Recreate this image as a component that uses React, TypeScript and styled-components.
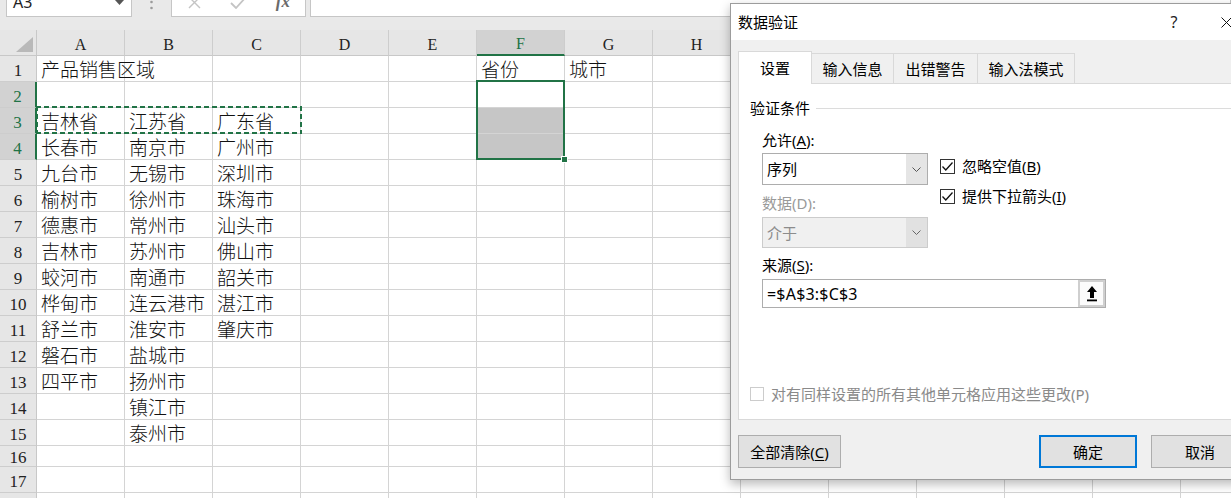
import styled, { createGlobalStyle } from 'styled-components'

const GlobalStyle = createGlobalStyle`
  html, body {
    margin: 0;
    padding: 0;
    background: #fff;
  }
  body {
    font-family: 'Noto Sans', 'Noto Sans CJK SC', sans-serif;
  }
`

const green = '#217346'

const Screen = styled.div`
  position: relative;
  width: 1231px;
  height: 498px;
  overflow: hidden;
  background: #fff;
`

/* ---------- formula bar ---------- */

const TopBar = styled.div`
  height: 30px;
  background: #e9e9e9;
  overflow: hidden;
`

const FormulaRow = styled.div`
  display: flex;
  align-items: stretch;
  height: 30px;
  margin-top: -13px;
  padding-left: 6px;
`

const NameBox = styled.div`
  width: 126px;
  box-sizing: border-box;
  background: #fff;
  border: 1px solid #c6c6c6;
  display: flex;
  align-items: center;
  justify-content: space-between;
  padding: 0 7px 0 6px;
  font-size: 16px;
  color: #222;
`

const Grip = styled.div`
  width: 39px;
  display: flex;
  align-items: center;
  justify-content: center;
`

const FxBox = styled.div`
  width: 135px;
  box-sizing: border-box;
  background: #fff;
  border: 1px solid #c6c6c6;
  display: flex;
`

const FxSlot = styled.div`
  flex: 1;
  display: flex;
  align-items: center;
  justify-content: center;
`

const FxText = styled.span`
  font-family: 'Liberation Serif', serif;
  font-style: italic;
  font-weight: bold;
  font-size: 17px;
  color: #6a6a6a;
`

const FormulaInput = styled.div`
  flex: 1;
  margin-left: 4px;
  background: #fff;
  border: 1px solid #c6c6c6;
`

/* ---------- sheet ---------- */

const Sheet = styled.div`
  display: grid;
  grid-template-columns: 37px repeat(14, 88px);
  grid-template-rows: 26px repeat(15, 26px) 21px repeat(2, 26px);
  font-family: 'Liberation Serif', 'Noto Sans CJK SC', serif;
`

type Place = { $row: number; $col: number }

const Corner = styled.div<Place>`
  grid-row: ${(p) => p.$row};
  grid-column: ${(p) => p.$col};
  background: #e6e6e6;
  border-right: 1px solid #c8c8c8;
  border-bottom: 1px solid #c8c8c8;
  box-sizing: border-box;
`

const ColHeader = styled.div<Place & { $active?: boolean }>`
  grid-row: ${(p) => p.$row};
  grid-column: ${(p) => p.$col};
  box-sizing: border-box;
  background: ${(p) => (p.$active ? '#d2d2d2' : '#e6e6e6')};
  color: ${(p) => (p.$active ? green : '#222')};
  border-right: 1px solid #cdcdcd;
  border-bottom: ${(p) => (p.$active ? `2px solid ${green}` : '1px solid #c8c8c8')};
  display: flex;
  align-items: center;
  justify-content: center;
  padding-top: 4px;
  font-size: 16px;
  line-height: 16px;
`

const RowHeader = styled.div<Place & { $active?: boolean }>`
  grid-row: ${(p) => p.$row};
  grid-column: ${(p) => p.$col};
  box-sizing: border-box;
  background: ${(p) => (p.$active ? '#d2d2d2' : '#e6e6e6')};
  color: ${(p) => (p.$active ? green : '#222')};
  border-right: ${(p) => (p.$active ? `2px solid ${green}` : '1px solid #c8c8c8')};
  border-bottom: 1px solid #cdcdcd;
  display: flex;
  align-items: center;
  justify-content: center;
  padding-top: 3px;
  font-size: 17px;
  line-height: 17px;
`

const Cell = styled.div<Place & { $fill?: boolean }>`
  grid-row: ${(p) => p.$row};
  grid-column: ${(p) => p.$col};
  box-sizing: border-box;
  border-right: 1px solid #d4d4d4;
  border-bottom: 1px solid #d4d4d4;
  background: ${(p) => (p.$fill ? '#c6c6c6' : 'transparent')};
  display: flex;
  align-items: center;
  padding: 3px 0 0 4px;
  font-size: 19px;
  line-height: 19px;
  font-weight: 300;
  white-space: nowrap;
  color: #111;
`

const Selection = styled.div`
  grid-row: 3 / 6;
  grid-column: 7;
  margin: -2px 0 0 -1px;
  border: 2px solid ${green};
  position: relative;
  z-index: 2;
`

const FillHandle = styled.div`
  position: absolute;
  right: -5px;
  bottom: -5px;
  width: 5px;
  height: 5px;
  background: ${green};
  border: 1px solid #fff;
`

const dash = (dir: string) =>
  `repeating-linear-gradient(${dir}, ${green} 0 5px, transparent 5px 8px)`

const CopyMarquee = styled.div`
  grid-row: 4;
  grid-column: 2 / 5;
  margin: -2px -1px 0 -1px;
  position: relative;
  z-index: 2;
  background:
    ${dash('90deg')} top left / 100% 2px no-repeat,
    ${dash('90deg')} bottom left / 100% 2px no-repeat,
    ${dash('180deg')} top left / 2px 100% no-repeat,
    ${dash('180deg')} top right / 2px 100% no-repeat;
`

/* ---------- dialog ---------- */

const Dialog = styled.div`
  position: absolute;
  left: 730px;
  top: 3px;
  width: 527px;
  height: 477px;
  box-sizing: border-box;
  border: 1px solid #9c9c9c;
  background: #f0f0f0;
  box-shadow: 0 4px 10px rgba(0, 0, 0, 0.28);
  display: flex;
  flex-direction: column;
  font-family: 'Noto Sans', 'Noto Sans CJK SC', sans-serif;
  font-size: 15px;
  color: #000;
  z-index: 10;
`

const TitleBar = styled.div`
  height: 36px;
  flex: none;
  background: #fff;
  display: flex;
  align-items: center;
  padding-left: 7px;
`

const TitleText = styled.div`
  flex: 1;
  line-height: 20px;
`

const TitleButton = styled.div<{ $w: number }>`
  width: ${(p) => p.$w}px;
  height: 100%;
  display: flex;
  align-items: center;
  justify-content: center;
  font-size: 16px;
  color: #222;
`

const Body = styled.div`
  flex: 1;
  display: flex;
  flex-direction: column;
  padding: 11px 7px 0 7px;
`

const TabRow = styled.div`
  display: flex;
  align-items: flex-end;
  height: 33px;
  margin-bottom: -1px;
  position: relative;
  z-index: 1;
`

const Tab = styled.div<{ $active?: boolean; $w: number }>`
  box-sizing: border-box;
  width: ${(p) => p.$w}px;
  height: ${(p) => (p.$active ? 33 : 31)}px;
  border: 1px solid #d9d9d9;
  border-bottom: ${(p) => (p.$active ? 'none' : '1px solid #d9d9d9')};
  background: ${(p) => (p.$active ? '#fff' : '#f0f0f0')};
  display: flex;
  align-items: center;
  justify-content: center;
  line-height: 20px;
  white-space: nowrap;
  & + & {
    margin-left: -1px;
  }
`

const Panel = styled.div`
  flex: 1;
  background: #fff;
  border: 1px solid #d9d9d9;
  display: flex;
  flex-direction: column;
`

const Legend = styled.div`
  display: flex;
  align-items: center;
  height: 22px;
  margin: 13px 0 0 11px;
  line-height: 20px;
  &::after {
    content: '';
    flex: 1;
    height: 1px;
    margin-left: 6px;
    background: #dcdcdc;
  }
`

const Fields = styled.div`
  display: flex;
  gap: 12px;
  margin-top: 9px;
  padding-left: 23px;
`

const Column = styled.div<{ $w?: number; $top?: number }>`
  display: flex;
  flex-direction: column;
  ${(p) => (p.$w ? `width: ${p.$w}px;` : '')}
  padding-top: ${(p) => p.$top ?? 0}px;
`

const FieldLabel = styled.div<{ $disabled?: boolean; $gap?: number }>`
  height: 24px;
  line-height: 24px;
  margin-top: ${(p) => p.$gap ?? 0}px;
  color: ${(p) => (p.$disabled ? '#9a9a9a' : '#000')};
  white-space: nowrap;
`

const Key = styled.span`
  text-decoration: underline;
  text-underline-offset: 2px;
`

const Select = styled.div<{ $disabled?: boolean; $gap?: number }>`
  height: ${(p) => (p.$disabled ? 31 : 32)}px;
  margin-top: ${(p) => p.$gap ?? 0}px;
  box-sizing: border-box;
  border: 1px solid ${(p) => (p.$disabled ? '#cccccc' : '#adadad')};
  background: ${(p) => (p.$disabled ? '#f0f0f0' : '#fff')};
  color: ${(p) => (p.$disabled ? '#8c8c8c' : '#000')};
  display: flex;
  align-items: stretch;
`

const SelectText = styled.div`
  flex: 1;
  display: flex;
  align-items: center;
  padding-left: 4px;
  line-height: 20px;
`

const DropButton = styled.div<{ $disabled?: boolean }>`
  width: 21px;
  background: ${(p) => (p.$disabled ? '#e1e1e1' : '#e5e5e5')};
  display: flex;
  align-items: center;
  justify-content: center;
`

const CheckRow = styled.div`
  height: 30px;
  display: flex;
  align-items: center;
  gap: 7px;
  white-space: nowrap;
  line-height: 20px;
`

const Box = styled.div<{ $disabled?: boolean }>`
  width: ${(p) => (p.$disabled ? 14 : 15)}px;
  height: ${(p) => (p.$disabled ? 14 : 15)}px;
  box-sizing: border-box;
  border: 1px solid ${(p) => (p.$disabled ? '#cccccc' : '#333')};
  background: #fff;
  display: flex;
  align-items: center;
  justify-content: center;
  flex: none;
`

const SourceBlock = styled.div`
  padding-left: 23px;
  margin-top: 5px;
  display: flex;
  flex-direction: column;
`

const SourceInput = styled.div`
  width: 344px;
  height: 29px;
  margin-top: 2px;
  box-sizing: border-box;
  border: 1px solid #adadad;
  background: #fff;
  display: flex;
  align-items: stretch;
`

const SourceText = styled.div`
  flex: 1;
  display: flex;
  align-items: center;
  padding-left: 4px;
  font-size: 16px;
  letter-spacing: 0.2px;
`

const PickButton = styled.div`
  width: 27px;
  box-sizing: border-box;
  border: 2px solid #cfcfcf;
  background: #fbfbfb;
  display: flex;
  align-items: center;
  justify-content: center;
`

const ApplyRow = styled.div`
  margin: auto 0 13px 11px;
  height: 24px;
  display: flex;
  align-items: center;
  gap: 7px;
  color: #8a8a8a;
  white-space: nowrap;
  line-height: 20px;
`

const Footer = styled.div`
  flex: none;
  display: flex;
  align-items: center;
  padding: 15px 7px 11px 7px;
`

const Button = styled.div<{ $w: number; $primary?: boolean }>`
  width: ${(p) => p.$w}px;
  height: 33px;
  box-sizing: border-box;
  background: #e1e1e1;
  border: ${(p) => (p.$primary ? '2px solid #0078d7' : '1px solid #adadad')};
  display: flex;
  align-items: center;
  justify-content: center;
  line-height: 20px;
  white-space: nowrap;
`

const Spacer = styled.div`
  flex: 1;
`

const Gap = styled.div`
  width: 14px;
`

/* ---------- icons ---------- */

const Chevron = ({ color }: { color: string }) => (
  <svg width="9" height="5" viewBox="0 0 9 5">
    <polyline points="0.5,0.5 4.5,4.5 8.5,0.5" fill="none" stroke={color} strokeWidth="1" />
  </svg>
)

const Tick = () => (
  <svg width="13" height="13" viewBox="0 0 13 13">
    <polyline points="1.5,6.5 4.8,10 11.5,2.5" fill="none" stroke="#111" strokeWidth="1.3" />
  </svg>
)

const UpArrow = () => (
  <svg width="12" height="17" viewBox="0 0 12 17">
    <polygon points="6,1 11,7 8,7 8,13 4,13 4,7 1,7" fill="#000" />
    <rect x="1" y="14.5" width="10" height="1.8" fill="#000" />
  </svg>
)

const CloseIcon = () => (
  <svg width="11" height="11" viewBox="0 0 11 11">
    <path d="M0.5 0.5 L10.5 10.5 M10.5 0.5 L0.5 10.5" stroke="#111" strokeWidth="1" />
  </svg>
)

/* ---------- data ---------- */

const columns = ['A', 'B', 'C', 'D', 'E', 'F', 'G', 'H', 'I', 'J', 'K', 'L', 'M', 'N']

const data: Record<number, string[]> = {
  1: ['产品销售区域', '', '', '', '', '省份', '城市'],
  3: ['吉林省', '江苏省', '广东省'],
  4: ['长春市', '南京市', '广州市'],
  5: ['九台市', '无锡市', '深圳市'],
  6: ['榆树市', '徐州市', '珠海市'],
  7: ['德惠市', '常州市', '汕头市'],
  8: ['吉林市', '苏州市', '佛山市'],
  9: ['蛟河市', '南通市', '韶关市'],
  10: ['桦甸市', '连云港市', '湛江市'],
  11: ['舒兰市', '淮安市', '肇庆市'],
  12: ['磐石市', '盐城市'],
  13: ['四平市', '扬州市'],
  14: ['', '镇江市'],
  15: ['', '泰州市'],
}

// row 18 is only a sliver at the bottom edge, its number is out of view
const rowCount = 18
const lastNumbered = 17

const tabs = [
  { label: '设置', w: 74, active: true },
  { label: '输入信息', w: 83 },
  { label: '出错警告', w: 85 },
  { label: '输入法模式', w: 98 },
]

function SheetGrid() {
  const rows = Array.from({ length: rowCount }, (_, i) => i + 1)
  return (
    <Sheet>
      <Corner $row={1} $col={1}>
        <svg width="36" height="25" viewBox="0 0 36 25">
          <polygon points="16,22 33,22 33,7" fill="#b9b9b9" />
        </svg>
      </Corner>
      {columns.map((c, i) => (
        <ColHeader key={c} $row={1} $col={i + 2} $active={c === 'F'}>
          {c}
        </ColHeader>
      ))}
      {rows.map((r) => (
        <RowHeader key={`h${r}`} $row={r + 1} $col={1} $active={r >= 2 && r <= 4}>
          {r <= lastNumbered ? r : ''}
        </RowHeader>
      ))}
      {rows.map((r) =>
        columns.map((c, i) => (
          <Cell
            key={`${c}${r}`}
            $row={r + 1}
            $col={i + 2}
            $fill={c === 'F' && (r === 3 || r === 4)}
          >
            {data[r]?.[i] ?? ''}
          </Cell>
        ))
      )}
      <CopyMarquee />
      <Selection>
        <FillHandle />
      </Selection>
    </Sheet>
  )
}

function ValidationDialog() {
  return (
    <Dialog>
      <TitleBar>
        <TitleText>数据验证</TitleText>
        <TitleButton $w={46}>?</TitleButton>
        <TitleButton $w={59}>
          <CloseIcon />
        </TitleButton>
      </TitleBar>
      <Body>
        <TabRow>
          {tabs.map((t) => (
            <Tab key={t.label} $w={t.w} $active={t.active}>
              {t.label}
            </Tab>
          ))}
        </TabRow>
        <Panel>
          <Legend>验证条件</Legend>
          <Fields>
            <Column $w={166}>
              <FieldLabel>
                允许(<Key>A</Key>):
              </FieldLabel>
              <Select $gap={1}>
                <SelectText>序列</SelectText>
                <DropButton>
                  <Chevron color="#555" />
                </DropButton>
              </Select>
              <FieldLabel $disabled $gap={6}>
                数据(D):
              </FieldLabel>
              <Select $disabled $gap={2}>
                <SelectText>介于</SelectText>
                <DropButton $disabled>
                  <Chevron color="#666" />
                </DropButton>
              </Select>
            </Column>
            <Column $top={23}>
              <CheckRow>
                <Box>
                  <Tick />
                </Box>
                <span>
                  忽略空值(<Key>B</Key>)
                </span>
              </CheckRow>
              <CheckRow>
                <Box>
                  <Tick />
                </Box>
                <span>
                  提供下拉箭头(<Key>I</Key>)
                </span>
              </CheckRow>
            </Column>
          </Fields>
          <SourceBlock>
            <FieldLabel>
              来源(<Key>S</Key>):
            </FieldLabel>
            <SourceInput>
              <SourceText>=$A$3:$C$3</SourceText>
              <PickButton>
                <UpArrow />
              </PickButton>
            </SourceInput>
          </SourceBlock>
          <ApplyRow>
            <Box $disabled />
            <span>对有同样设置的所有其他单元格应用这些更改(P)</span>
          </ApplyRow>
        </Panel>
      </Body>
      <Footer>
        <Button $w={103}>
          全部清除(<Key>C</Key>)
        </Button>
        <Spacer />
        <Button $w={98} $primary>
          确定
        </Button>
        <Gap />
        <Button $w={98}>取消</Button>
      </Footer>
    </Dialog>
  )
}

function App() {
  return (
    <Screen>
      <GlobalStyle />
      <TopBar>
        <FormulaRow>
          <NameBox>
            <span>A3</span>
            <svg width="9" height="5" viewBox="0 0 9 5">
              <polygon points="0,0 9,0 4.5,5" fill="#555" />
            </svg>
          </NameBox>
          <Grip>
            <svg width="3" height="16" viewBox="0 0 3 16">
              <circle cx="1.5" cy="2" r="1.3" fill="#9a9a9a" />
              <circle cx="1.5" cy="8" r="1.3" fill="#9a9a9a" />
              <circle cx="1.5" cy="14" r="1.3" fill="#9a9a9a" />
            </svg>
          </Grip>
          <FxBox>
            <FxSlot>
              <svg width="13" height="13" viewBox="0 0 13 13">
                <path d="M1 1 L12 12 M12 1 L1 12" stroke="#c4c4c4" strokeWidth="1.4" />
              </svg>
            </FxSlot>
            <FxSlot>
              <svg width="17" height="13" viewBox="0 0 17 13">
                <polyline points="1,7 6,12 16,1" fill="none" stroke="#c4c4c4" strokeWidth="1.8" />
              </svg>
            </FxSlot>
            <FxSlot>
              <FxText>fx</FxText>
            </FxSlot>
          </FxBox>
          <FormulaInput />
        </FormulaRow>
      </TopBar>
      <SheetGrid />
      <ValidationDialog />
    </Screen>
  )
}

export default App
